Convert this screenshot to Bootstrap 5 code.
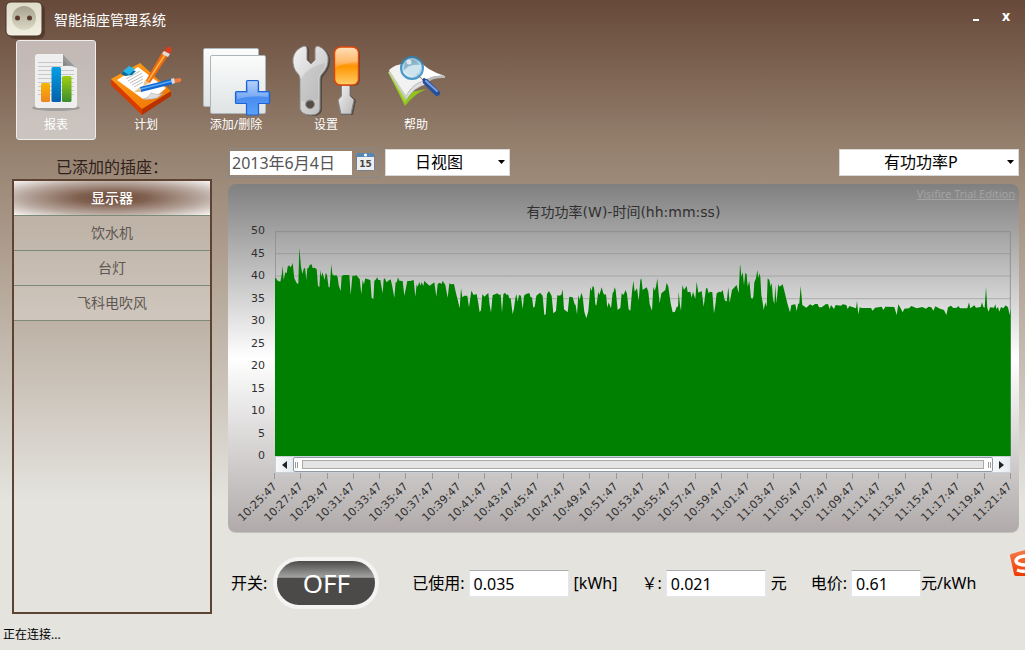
<!DOCTYPE html>
<html lang="zh-CN">
<head>
<meta charset="utf-8">
<meta name="viewport" content="width=device-width, initial-scale=1">
<title>智能插座管理系统</title>
<link href="https://cdn.jsdelivr.net/npm/bootstrap@5.3.0/dist/css/bootstrap.min.css" rel="stylesheet">
<style>
  body {
    font-family: "Noto Sans", "Noto Sans CJK SC", sans-serif;
    font-size: 16px; line-height: 24px; color: #000;
    background: #e4e3de linear-gradient(#674939 0, #96816f 150px, #bfb4a8 330px, #e4e3de 500px) no-repeat;
  }
  .titlebar { height: 40px; color: #fff; font-size: 14px; }
  .winbtn { width: 30px; height: 32px; padding: 0; border: 0; background: none; color: #fff; font-size: 14px; font-weight: 700; line-height: 32px; }
  .toolbar { gap: 10px; }
  .tool { width: 80px; height: 100px; padding: 0; border: 1px solid transparent; border-radius: 3px; background: none; color: #fff; font-size: 12px; line-height: 16px; }
  .tool svg { display: block; width: 78px; height: 76px; }
  .tool.active { border-color: #eee; background: linear-gradient(#c3b8b3, #cbc5c0); }
  .workarea { padding: 8px 6px 0 12px; gap: 16px; }
  .sidebar { width: 200px; }
  .sidebar h2 { font-size: 16px; line-height: 24px; font-weight: 400; margin: 7px 0 0; color: #2e211b; text-align: center; }
  .sockets { border: 2px solid #5f4332; }
  .sockets .list-group-item {
    border: 0; border-bottom: 1px solid #7c8a78; border-radius: 0; text-align: center;
    font-size: 14px; line-height: 20px; padding: 7px 0; color: #5d5853; background: rgba(255,255,255,.28);
  }
  .sockets .list-group-item.active {
    margin: 0; color: #fff; font-weight: 500; border-color: #7c8a78;
    background: radial-gradient(ellipse farthest-corner at center, #6e4b3b 0, #80604f 25%, #b9a9a0 66%, #f7f5f4 100%);
  }
  .datebox { width: 152px; height: 30px; border: 1px solid #85898c; padding: 2px 3px 2px 1px; margin-right: 5px; }
  .datebox input { width: 122px; height: 24px; border: 0; padding: 0 2px; color: #555; background: #fff; }
  .datebox button { border: 0; background: none; padding: 0 0 2px; line-height: 0; }
  .combo {
    height: 27px; margin-bottom: 2px; border: 1px solid #d9d9d9; border-radius: 0; padding: 0 20px 0 29px; color: #000; font-size: 16px; line-height: 24px; appearance: none;
    background: #fff url("data:image/svg+xml,%3Csvg xmlns='http://www.w3.org/2000/svg' width='7' height='4'%3E%3Cpath d='M0 0h7L3.500 4z'/%3E%3C/svg%3E") no-repeat right 4px center;
  }
  .view-combo { width: 125px; }
  .metric-combo { width: 180px; padding-left: 44px; }
  .chart-panel { margin-top: 6px; border-radius: 8px; background: linear-gradient(#808080, #fff 50%, #b0abaa); border-bottom: 1px solid #c4c1be; color: #303030; }
  .trial { font-size: 11px; line-height: 16px; padding: 2px 4px 0 0; text-align: right; }
  .trial a { color: #a3a3a3; }
  .chart-title { font-family: "DejaVu Sans", "Noto Sans CJK SC", sans-serif; font-size: 14px; line-height: 20px; margin: 0 0 9px; font-weight: 400; text-align: center; }
  .plot-grid { display: grid; grid-template-columns: 37px 1fr 8px; column-gap: 10px; grid-template-rows: minmax(225px, 1fr) auto auto; font-family: "DejaVu Sans", sans-serif; font-size: 11px; }
  .plot-grid > .span-plot { grid-column: 2 / 3; margin-right: -10px; }
  .yaxis { margin: -8px 0; line-height: 16px; text-align: right; }
  .plot { width: 100%; height: 100%; display: block; }
  .range { height: 17px; border: 1px solid #c9d0d6; background: #eef0f2; }
  .range button { border: 0; padding: 0; width: 17px; background: linear-gradient(90deg, #f7f9fb, #e6ebf0); line-height: 0; }
  .thumb { border: 1px solid #8e9aa5; border-radius: 2px; background: #fff; padding: 2px 1px; gap: 4px; }
  .grip { width: 3px; height: 6px; border-left: 1px solid #999; border-right: 1px solid #999; }
  .track { border: 1px solid #aaa; background: #e4e4e4; height: 9px; }
  .xaxis { height: 59px; }
  .xtick { width: 0; }
  .xtick i { width: 1px; height: 6px; background: #999; flex: none; }
  .xtick span { white-space: nowrap; line-height: 12px; transform: rotate(-45deg); transform-origin: 100% 50%; }
  .readings { height: 52px; margin: 24px 0 5px; padding-left: 3px; }
  .offswitch {
    width: 106px; height: 52px; margin: 0 33px 0 6px; border: 4px solid #f3f3f1; border-radius: 26px; padding: 0; color: #fff; font-size: 26px; line-height: 40px;
    background: linear-gradient(#4c4b49 0, #a3a3a1 37%, #4c4a48 39%, #4c4a48 100%);
  }
  .reading { height: 27px; border: 1px solid #e3e6ee; border-top-color: #abadb3; padding: 2px 4px 0; background: #fff; color: #000; }
  .wide { width: 100px; }
  .narrow { width: 70px; }
  .unit { margin: 0 24px 0 5px; }
  .status { font-size: 12px; line-height: 16px; padding: 13px 3px 7px; }
  .ime { position: absolute; right: 0; top: 548px; }
</style>
</head>
<body class="d-flex flex-column min-vh-100 overflow-x-hidden position-relative">

<header>
  <div class="titlebar d-flex align-items-start">
    <svg width="50" height="40" viewBox="0 0 50 40" aria-hidden="true">
      <defs><linearGradient id="so" x2="0" y2="1"><stop stop-color="#dedbc8"/><stop offset="1" stop-color="#f2f0e2"/></linearGradient>
      <linearGradient id="si" x2="0" y2="1"><stop stop-color="#a5a18e"/><stop offset="1" stop-color="#dcd9c6"/></linearGradient></defs>
      <rect x="9" y="4" width="36" height="35" rx="6" fill="#4b342a" opacity=".75"/>
      <rect x="6" y="2" width="36" height="34" rx="5" fill="url(#so)" stroke="#4a3328"/>
      <circle cx="24" cy="18" r="12" fill="url(#si)"/>
      <circle cx="17.500" cy="18" r="2.500" fill="#5c3a2c"/><circle cx="29.500" cy="18" r="2.500" fill="#5c3a2c"/>
    </svg>
    <span class="ms-1 mt-2">智能插座管理系统</span>
    <div class="ms-auto me-1 d-flex">
      <button class="winbtn" aria-label="最小化"><svg width="8" height="10" aria-hidden="true"><path d="M1 8h6" stroke="#fff" stroke-width="2"/></svg></button>
      <button class="winbtn" aria-label="关闭">x</button>
    </div>
  </div>

  <nav class="toolbar d-flex ps-3">
    <button class="tool active d-flex flex-column align-items-center">
      <svg viewBox="0 0 78 76" aria-hidden="true">
        <defs><linearGradient id="b1" x2="0" y2="1"><stop stop-color="#f8b500"/><stop offset="1" stop-color="#ee8420"/></linearGradient>
        <linearGradient id="b2" x2="0" y2="1"><stop stop-color="#049fe6"/><stop offset="1" stop-color="#0560a8"/></linearGradient>
        <linearGradient id="b3" x2="0" y2="1"><stop stop-color="#a0cf10"/><stop offset="1" stop-color="#3b8e2e"/></linearGradient>
        <linearGradient id="fd" x1="0" y1="1" x2="1" y2="0"><stop stop-color="#777"/><stop offset="1" stop-color="#ccc"/></linearGradient></defs>
        <ellipse cx="39" cy="67" rx="24" ry="3" fill="#777" opacity=".5"/>
        <path d="M21 13h25l14 14v37q0 3-3 3H21q-3 0-3-3V16q0-3 3-3z" fill="#efefef"/>
        <path d="M21 21.500h24M21 25.500h24M21 29.500h36M21 33.500h36M21 37.500h36M21 41.500h36M21 45.500h36M21 49.500h36M21 53.500h36" stroke="#c8c8c8"/>
        <path d="M46 13l14 14q-5-3-14-2z" fill="url(#fd)"/>
        <rect x="24" y="42" width="9" height="19" rx="1.500" fill="url(#b1)"/><rect x="34.500" y="26" width="9.500" height="35" rx="1.500" fill="url(#b2)"/><rect x="45" y="35" width="9.500" height="26" rx="1.500" fill="url(#b3)"/>
      </svg>报表</button>
    <button class="tool d-flex flex-column align-items-center">
      <svg viewBox="0 0 78 76" aria-hidden="true">
        <defs><linearGradient id="cb" x2="1" y2="1"><stop stop-color="#ffa31a"/><stop offset="1" stop-color="#f07000"/></linearGradient></defs>
        <path d="M4 38v6l31 30V67z" fill="#d83c00"/><path d="M35 67v7l29-19v-5z" fill="#b83200"/>
        <path d="M4 38L33 22 64 50 35 68z" fill="url(#cb)"/>
        <path d="M10 39L31 26 59 47 49 56q-5 3-13 2z" fill="#fff"/><path d="M36 58q6-1 8-6 6 3 13 0l-7 5q-6 2-14 1z" fill="#ddd" stroke="#999" stroke-width=".5"/>
        <path d="M19 38l14-8M21 40l14-8M23 42l13-7M25 44l11-6M27 46l9-5" stroke="#aaa" stroke-width=".8"/>
        <path d="M14 33l5-5 10 2-4 4-7 1z" fill="#07699d"/><path d="M16 30l6-5 6 3-6 6z" fill="#27b6ea"/>
        <path d="M38 41L56 10l6 3-19 29z" fill="#ef6c0a"/><path d="M41 40L59 12" stroke="#ffb04f" stroke-width="1.500"/><path d="M36 45l2-6 5 3z" fill="#e9c48c"/><path d="M57 10l3-4q4-1 5 3l-2 4z" fill="#d8401b"/><path d="M55 13l6 3 2-3-6-3z" fill="#ddd"/>
        <path d="M33 46l31-8 2 5-32 8z" fill="#1067d0"/><path d="M34 48l31-8" stroke="#5aaaf5" stroke-width="1.500"/><path d="M27 51l6-5 1 5z" fill="#e9c48c"/><path d="M67 38l6-1q3 2 0 4l-5 1z" fill="#f07b3c"/><path d="M64 38l3-1 1 5-3 1z" fill="#ddd"/>
      </svg>计划</button>
    <button class="tool d-flex flex-column align-items-center">
      <svg viewBox="0 0 78 76" aria-hidden="true">
        <defs><linearGradient id="pg" x2="0" y2="1"><stop stop-color="#fbfcfc"/><stop offset="1" stop-color="#dfe3e4"/></linearGradient>
        <linearGradient id="pl" x2="0" y2="1"><stop stop-color="#9dc4fa"/><stop offset=".5" stop-color="#4a8cf0"/><stop offset="1" stop-color="#5aa2fa"/></linearGradient></defs>
        <rect x="6.500" y="7.500" width="55" height="58" rx="1.500" fill="url(#pg)" stroke="#aeb6bc"/>
        <rect x="13.500" y="14.500" width="55" height="58" rx="1.500" fill="url(#pg)" stroke="#aeb6bc"/>
        <path d="M50.500 39.500h10q1 0 1 1V50.500H71.500q1 0 1 1v10q0 1-1 1H61.500V73q0 1-1 1h-10q-1 0-1-1V62.500H39.500q-1 0-1-1v-10q0-1 1-1H49.500V40.500q0-1 1-1z" fill="url(#pl)" stroke="#1f62d6" stroke-width="1.200"/>
        <path d="M51 41h9v11h11v4q-16-2-31 2v-6h11z" fill="#fff" opacity=".25"/>
      </svg>添加/删除</button>
    <button class="tool d-flex flex-column align-items-center">
      <svg viewBox="0 0 78 76" aria-hidden="true">
        <defs><linearGradient id="mt" x2="1" y2="1"><stop stop-color="#f2f2f2"/><stop offset="1" stop-color="#b9b9b9"/></linearGradient>
        <linearGradient id="hd" x2="0" y2="1"><stop stop-color="#ffd9a8"/><stop offset=".4" stop-color="#ffa94a"/><stop offset=".5" stop-color="#ff9400"/><stop offset="1" stop-color="#ffcf6a"/></linearGradient></defs>
        <path d="M17 5q3 0 3 3v11l4 4 4-4V8q0-3 3-3 8 3 10 11 1 10-6 17-2 2-2 5v30q-1 6-9 6-9 0-11-6V38q0-3-2-5-6-6-5-16Q8 8 17 5z" transform="translate(2 1)" fill="#333" opacity=".6"/>
        <path fill-rule="evenodd" d="M17 5q3 0 3 3v11l4 4 4-4V8q0-3 3-3 8 3 10 11 1 10-6 17-2 2-2 5v30q-1 6-9 6-9 0-11-6V38q0-3-2-5-6-6-5-16Q8 8 17 5zM23 59a4.300 4.300 0 1 0 .1 0z" fill="url(#mt)" stroke="#888"/>
        <path d="M14 38q6-12 24-16 0 6-5 11-2 2-2 5v20q-8 4-17 2z" fill="#aaa" opacity=".35"/>
        <path d="M56 44h8v11l5 4-3 15H54l-3-15 5-4z" fill="#333" opacity=".6"/>
        <path d="M54.500 43h8.500v12l4 4-3 14H54l-3-14 3.500-4z" fill="url(#mt)" stroke="#888"/>
        <rect x="49" y="7" width="24" height="38" rx="6" fill="#333" opacity=".5"/>
        <rect x="47.500" y="6" width="24" height="38" rx="6" fill="url(#hd)" stroke="#df4508" stroke-width="1.500"/>
        <path d="M48 27q5-3 10-4 7-2 13-2v-8q0-6-6-6H54q-6 0-6 6z" fill="#fff" opacity=".18"/>
      </svg>设置</button>
    <button class="tool d-flex flex-column align-items-center">
      <svg viewBox="0 0 78 76" aria-hidden="true">
        <path d="M11 31l17 34q10-13 22-17l-22 4z" fill="#8fc31e"/><path d="M11 31l17 31 3-7-15-25z" fill="#a5d637"/>
        <path d="M12 29q6-6 15-6l20 17q-11 2-18 15z" fill="#f2f2f2"/><path d="M12 29l17 26v4L12 32z" fill="#ccc"/><path d="M29 55q7-13 18-15l3 3q-13 3-21 16z" fill="#ddd" stroke="#aaa" stroke-width=".5"/>
        <path d="M43 20q6 9 25 15-12-1-20 5L28 23q9-1 15-3z" fill="#fff"/><path d="M68 35v2q-13-1-19 6l-2-3q7-6 21-5z" fill="#bbb"/>
        <circle cx="35" cy="27" r="11" fill="#a9d2e6" opacity=".85" stroke="#2b86bf" stroke-width="2"/>
        <circle cx="35" cy="27" r="8" fill="#6e9db4" opacity=".55"/><path d="M26 31q5-9 18-7-1 10-9 12-6 0-9-5z" fill="#e8f6fc" opacity=".7"/><circle cx="32" cy="21" r="2.500" fill="#fff" opacity=".7"/>
        <path d="M46 38l3 2" stroke="#123d7c" stroke-width="3"/><path d="M49 41l11 11" stroke="#27509c" stroke-width="6" stroke-linecap="round"/><path d="M49 40l11 10" stroke="#7c9fe0" stroke-width="2" stroke-linecap="round"/>
      </svg>帮助</button>
  </nav>
</header>

<main class="workarea d-flex flex-grow-1">
  <aside class="sidebar d-flex flex-column flex-shrink-0">
    <h2>已添加的插座：</h2>
    <div class="sockets list-group rounded-0 flex-grow-1">
      <button class="list-group-item list-group-item-action active">显示器</button>
      <button class="list-group-item list-group-item-action">饮水机</button>
      <button class="list-group-item list-group-item-action">台灯</button>
      <button class="list-group-item list-group-item-action">飞科电吹风</button>
    </div>
  </aside>

  <section class="flex-grow-1 d-flex flex-column">
    <div class="d-flex align-items-center">
      <div class="datebox d-flex align-items-center justify-content-between">
        <input type="text" value="2013年6月4日" aria-label="日期">
        <button aria-label="选择日期">
          <svg width="20" height="20" viewBox="0 0 20 20" aria-hidden="true"><rect x=".5" y="1.500" width="18" height="17" rx="1" fill="#eceef0" stroke="#777f8a"/><path d="M1 1h17v4H1z" fill="#5586b5"/><circle cx="9.500" cy="3" r="1.500" fill="#fff"/><text x="9.500" y="15" text-anchor="middle" font-family="DejaVu Sans" font-weight="700" font-size="9" fill="#444">15</text></svg>
        </button>
      </div>
      <select class="combo view-combo" aria-label="视图"><option>日视图</option></select>
      <select class="combo metric-combo ms-auto" aria-label="指标"><option>有功功率P</option></select>
    </div>

    <div class="chart-panel flex-grow-1 d-flex flex-column">
      <div class="trial"><a href="#">Visifire Trial Edition</a></div>
      <h3 class="chart-title">有功功率(W)-时间(hh:mm:ss)</h3>
      <div class="plot-grid flex-grow-1">
        <div class="yaxis d-flex flex-column justify-content-between">
          <span>50</span><span>45</span><span>40</span><span>35</span><span>30</span><span>25</span><span>20</span><span>15</span><span>10</span><span>5</span><span>0</span>
        </div>
        <div class="span-plot">
          <svg class="plot" viewBox="0 18 2208 675" preserveAspectRatio="none" role="img" aria-label="有功功率曲线">
            <path d="M0 86H2208M0 153H2208M0 221H2208" stroke="#888" stroke-opacity=".5" stroke-width="3"/>
            <path d="M1 693V20H2206V693" fill="none" stroke="#888" stroke-opacity=".8" stroke-width="3"/>
            <path id="area" fill="#008000"/>
          </svg>
        </div>
        <div class="span-plot range d-flex">
          <button aria-label="向左"><svg width="5" height="8"><path d="M5 0v8L0 4z" fill="#222"/></svg></button>
          <div class="thumb flex-grow-1 d-flex align-items-center"><span class="grip"></span><span class="track flex-grow-1"></span><span class="grip"></span></div>
          <button aria-label="向右"><svg width="5" height="8"><path d="M0 0v8l5-4z" fill="#222"/></svg></button>
        </div>
        <div class="span-plot xaxis d-flex justify-content-between" id="xaxis"></div>
      </div>
    </div>

    <div class="readings d-flex align-items-center text-nowrap">
      <label for="power">开关:</label>
      <button id="power" class="offswitch">OFF</button>
      <label for="used">已使用:</label>
      <input id="used" class="reading wide ms-1" value="0.035"><span class="unit">[kWh]</span>
      <label for="cost">￥:</label>
      <input id="cost" class="reading wide ms-1" value="0.021"><span class="unit">元</span>
      <label for="price">电价:</label>
      <input id="price" class="reading narrow ms-1" value="0.61"><span>元/kWh</span>
    </div>
  </section>
</main>

<footer class="status">正在连接...</footer>

<svg class="ime" width="16" height="32" viewBox="0 0 16 32" aria-hidden="true">
  <defs><linearGradient id="im" x2="0" y2="1"><stop stop-color="#f77a4a"/><stop offset="1" stop-color="#ef3a00"/></linearGradient></defs>
  <path d="M16 2L2 6q-1 0-1 2l4 18q0 2 3 2h8z" fill="url(#im)"/>
  <path d="M16 8q-9 1-9 5 1 4 9 4M8 22q5 2 8 1" fill="none" stroke="#fff" stroke-width="3.500"/>
</svg>

<script src="https://cdn.jsdelivr.net/npm/bootstrap@5.3.0/dist/js/bootstrap.bundle.min.js"></script>
<script>
  // Power samples in three blocks: [x offset, "x,y x,y ..."], y grows downwards in plot units.
  const blocks = [
    [-150, "150,158 153,160 158,167 166,170 170,150 173,123 176,165 181,142 185,145 188,125 192,121 197,127 201,120 203,113 208,160 213,170 217,177 220,175 223,68 228,125 232,147 236,132 240,128 244,165 247,130 250,130 254,120 260,118 263,130 268,128 275,132 279,182 283,187 286,135 289,155 292,142 296,155 299,165 302,143 306,150 311,187 314,187 319,117 322,148 328,152 334,150 338,157 341,180 347,198 350,153 356,150 373,150 377,210 382,152 390,152 394,150 400,158 404,162 409,208 413,165 417,178 421,160 426,162 436,165 440,218 445,223 448,168 453,163 457,157 460,165 466,165 473,205 476,163 480,160 484,172 492,166 497,163 501,180 508,218 512,170 515,173 519,157 523,167 533,168 538,212 547,168 556,168 566,165 571,215 575,178 578,185 583,170 586,182 590,172 595,183 598,167 604,174 614,182 620,178 628,172 634,215 638,177 644,173 650,177 653,167 661,180 668,218 673,175 678,178 687,177 692,200 699,228 704,250 708,190 712,217 718,212 727,212 732,247 739,197 746,210 755,207 760,235 764,262 768,255 772,208 779,215 783,210 790,204 794,240 798,262 803,210"],
    [615, "45,208 52,205 58,210 62,208 66,262 70,208 75,203 80,210 84,208 88,220 92,220 98,268 102,250 106,220 109,207 113,230 117,210 123,212 128,252 132,212 138,207 148,204 152,217 156,217 160,248 164,245 169,212 180,203 188,212 193,270 197,268 201,207 207,198 212,207 215,213 220,265 228,258 232,210 236,212 244,210 248,193 252,253 263,262 268,215 278,217 284,238 287,240 291,268 295,210 299,225 304,203 308,215 313,260 319,280 325,258 331,187 335,198 338,183 342,187 346,238 349,242 355,200 358,210 365,187 370,205 374,210 378,207 382,248 386,232 393,250 398,203 401,200 404,187 407,195 413,255 421,248 425,205 430,210 437,195 441,207 446,253 451,257 456,200 460,167 464,200 471,190 476,227 481,165 484,160 488,195 500,187 505,200 509,238 516,257 520,185 524,197 528,185 532,160 536,205 539,235 544,205 556,195 560,173 565,185 572,235 578,262 585,260 590,245 594,245 596,200 600,240 603,257 607,180 612,195 620,183 623,202 631,200 635,218 639,200 646,222 650,170 655,203 665,198 671,245 678,190 682,190 686,205 690,200 697,202 702,265 706,240 710,205 718,200 723,202 728,195 734,225 740,230 745,187 749,233 756,195 762,188 770,180 776,205 780,120"],
    [1395, "1,120 4,155 8,142 12,180 16,143 20,148 23,185 28,167 33,218 37,222 40,215 43,172 48,160 52,135 55,160 58,145 61,155 64,210 68,232 71,255 76,232 80,245 83,160 88,165 92,185 95,173 99,222 103,237 106,180 109,235 115,178 119,185 128,178 134,202 142,235 150,262 154,240 166,238 170,258 174,238 178,235 182,183 187,240 199,248 210,238 218,242 225,237 233,237 237,247 245,247 257,238 264,237 269,252 273,240 282,252 287,240 303,242 308,238 319,240 323,252 328,243 348,250 351,228 355,268 359,247 365,249 393,249 398,257 405,248 425,245 430,255 436,245 463,246 470,270 475,238 482,250 488,262 493,251 507,250 514,243 530,250 547,246 558,251 566,245 574,247 580,257 586,244 600,251 612,255 619,270 624,247 633,242 640,249 650,248 655,243 660,250 682,250 687,232 691,250 703,241 708,248 722,246 726,232 730,246 734,248 738,185 742,250 746,260 750,247 762,248 766,238 769,252 774,246 778,260 783,246 790,250 797,241 804,247 809,270 812,250"]
  ];
  const points = blocks.flatMap(([dx, s]) => s.split(" ").map(p => { const [x, y] = p.split(",").map(Number); return `${x + dx} ${y}`; }));
  document.getElementById("area").setAttribute("d", `M0 693L${points.join("L")}V693Z`);

  // One time label every two minutes, from 10:25:47 to 11:21:47.
  const axis = document.getElementById("xaxis");
  for (let m = 625; m <= 681; m += 2) {
    const tick = document.createElement("div");
    tick.className = "xtick d-flex flex-column align-items-end";
    tick.innerHTML = `<i></i><span>${Math.floor(m / 60)}:${String(m % 60).padStart(2, "0")}:47</span>`;
    axis.append(tick);
  }
</script>
</body>
</html>
